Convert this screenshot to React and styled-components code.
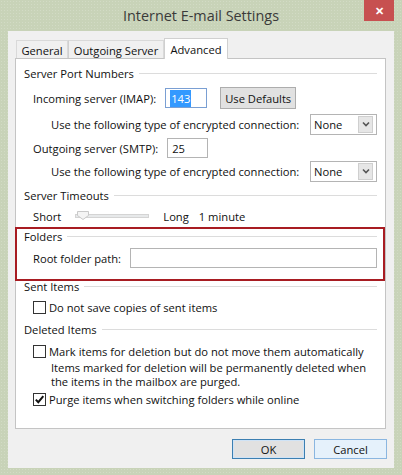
import React from 'react'
import styled, { createGlobalStyle } from 'styled-components'

const GlobalStyle = createGlobalStyle`
  html, body {
    margin: 0;
    padding: 0;
    background: #c8d3b8;
  }
  body {
    font-family: "Segoe UI", "Open Sans", "Noto Sans", sans-serif;
    font-size: 11.2px;
    color: #111;
  }
  * { box-sizing: border-box; }
`

function App() {
  return (
    <>
      <GlobalStyle />
      <Window>
        <TitleBar>
          <Title>Internet E-mail Settings</Title>
          <CloseButton>✕</CloseButton>
        </TitleBar>
        <Client>
          <TabList>
            <Tab $w={52}>General</Tab>
            <Tab $w={96}>Outgoing Server</Tab>
            <Tab $w={64} $active>Advanced</Tab>
          </TabList>
          <Panel>
            <SectionHeader $mt={0}>Server Port Numbers</SectionHeader>
            <Row $mt={12} $indent={9}>
              <span>Incoming server (IMAP):</span>
              <TextBox $width={42} $focused>
                <Selected>143</Selected>
              </TextBox>
              <PushButton>Use Defaults</PushButton>
            </Row>
            <Row $mt={10} $indent={27}>
              <span>Use the following type of encrypted connection:</span>
              <Dropdown />
            </Row>
            <Row $mt={8} $indent={9}>
              <span>Outgoing server (SMTP):</span>
              <TextBox $width={41}>25</TextBox>
            </Row>
            <Row $mt={7} $indent={27}>
              <span>Use the following type of encrypted connection:</span>
              <Dropdown />
            </Row>

            <SectionHeader $mt={11}>Server Timeouts</SectionHeader>
            <Row $mt={8} $indent={9}>
              <span>Short</span>
              <Slider>
                <svg width="12" height="9" viewBox="0 0 12 9">
                  <path d="M0.5 0.5 H11.5 V4.5 L6 8.5 L0.5 4.5 Z" fill="#f4f4f4" stroke="#c9c9c9" />
                </svg>
              </Slider>
              <span>Long</span>
              <Spacer $w={10} />
              <span>1 minute</span>
            </Row>

            <Highlight>
              <SectionHeader $mt={0}>Folders</SectionHeader>
              <Row $mt={9} $indent={9}>
                <span>Root folder path:</span>
                <TextBox $width={247} $grow />
              </Row>
            </Highlight>

            <SectionHeader $mt={0}>Sent Items</SectionHeader>
            <Row $mt={8} $indent={9}>
              <Checkbox />
              <span>Do not save copies of sent items</span>
            </Row>

            <SectionHeader $mt={9}>Deleted Items</SectionHeader>
            <Row $mt={9} $indent={9}>
              <Checkbox />
              <span>Mark items for deletion but do not move them automatically</span>
            </Row>
            <Note>
              <div>Items marked for deletion will be permanently deleted when</div>
              <div>the items in the mailbox are purged.</div>
            </Note>
            <Row $mt={2} $indent={9}>
              <Checkbox checked />
              <span>Purge items when switching folders while online</span>
            </Row>
          </Panel>
          <Footer>
            <DialogButton $default>OK</DialogButton>
            <DialogButton $hover>Cancel</DialogButton>
          </Footer>
        </Client>
      </Window>
    </>
  )
}

function Dropdown() {
  return (
    <Select>
      <span>None</span>
      <ArrowBox>
        <svg width="8" height="6" viewBox="0 0 8 6">
          <path d="M1 1.5 L4 4.5 L7 1.5" fill="none" stroke="#555" strokeWidth="1.6" />
        </svg>
      </ArrowBox>
    </Select>
  )
}

function Checkbox({ checked }) {
  return (
    <Box>
      {checked && (
        <svg width="11" height="11" viewBox="0 0 11 11">
          <path d="M1.8 5.6 L4.3 8.2 L9.3 2.2" fill="none" stroke="#111" strokeWidth="2" />
        </svg>
      )}
    </Box>
  )
}

export default App

const Window = styled.div`
  width: 402px;
  height: 475px;
  display: flex;
  flex-direction: column;
  background-color: #c8d3b8;
  background-image: radial-gradient(rgba(255, 255, 255, 0.18) 1px, transparent 1px);
  background-size: 3px 3px;
`

const TitleBar = styled.div`
  position: relative;
  height: 31px;
  display: flex;
  align-items: center;
  justify-content: center;
`

const Title = styled.span`
  font-size: 14.4px;
  color: #3a3a3a;
  margin-top: -1px;
`

const CloseButton = styled.div`
  position: absolute;
  top: 0;
  right: 8px;
  width: 30px;
  height: 21px;
  background: #c75050;
  color: #fff;
  font-size: 11px;
  font-weight: bold;
  display: flex;
  align-items: center;
  justify-content: center;
`

const Client = styled.div`
  flex: 1;
  margin: 0 8px 7px 8px;
  padding: 7px 8px 9px 7px;
  background: #f0f0f0;
  display: flex;
  flex-direction: column;
`

const TabList = styled.div`
  display: flex;
  align-items: flex-end;
  height: 20px;
  padding-left: 1px;
  position: relative;
  z-index: 1;
`

const Tab = styled.div`
  width: ${p => p.$w}px;
  height: ${p => (p.$active ? '21px' : '18px')};
  margin-bottom: ${p => (p.$active ? '-1px' : '0')};
  padding-top: ${p => (p.$active ? '0' : '1px')};
  display: flex;
  align-items: center;
  justify-content: center;
  background: ${p => (p.$active ? '#fff' : '#f0f0f0')};
  border: 1px solid ${p => (p.$active ? '#d0d0d0' : '#d9d9d9')};
  border-bottom: none;
  & + & {
    border-left: ${p => (p.$active ? '1px solid #d0d0d0' : 'none')};
  }
`

const Panel = styled.div`
  height: 371px;
  background: #fff;
  border: 1px solid #c4c4c4;
  padding: 9px 8px 0 8px;
  display: flex;
  flex-direction: column;
`

const SectionHeader = styled.div`
  height: 10px;
  margin-top: ${p => p.$mt}px;
  display: flex;
  align-items: center;
  gap: 5px;
  white-space: nowrap;
  &::after {
    content: '';
    flex: 1;
    height: 1px;
    background: #dcdcdc;
  }
`

const Row = styled.div`
  height: 16px;
  margin-top: ${p => p.$mt}px;
  padding-left: ${p => p.$indent}px;
  display: flex;
  align-items: center;
  white-space: nowrap;
`

const Spacer = styled.div`
  width: ${p => p.$w}px;
`

const TextBox = styled.div`
  width: ${p => p.$width}px;
  height: 20px;
  flex-shrink: 0;
  margin-left: ${p => (p.$grow ? 'auto' : '9px')};
  border: 1px solid ${p => (p.$focused ? '#7a9fd3' : '#b4b4b4')};
  background: #fff;
  padding-left: 4px;
  display: flex;
  align-items: center;
`

const Selected = styled.span`
  background: #3399ff;
  color: #fff;
  height: 17px;
  line-height: 17px;
  padding: 0 1px;
`

const PushButton = styled.div`
  width: 76px;
  height: 22px;
  flex-shrink: 0;
  margin-left: 13px;
  background: #e1e1e1;
  border: 1px solid #adadad;
  display: flex;
  align-items: center;
  justify-content: center;
`

const Select = styled.div`
  width: 67px;
  height: 21px;
  flex-shrink: 0;
  margin-left: auto;
  border: 1px solid #b4b4b4;
  background: #fff;
  padding: 0 3px 0 3px;
  display: flex;
  align-items: center;
  justify-content: space-between;
`

const ArrowBox = styled.div`
  width: 15px;
  height: 17px;
  background: #e6e6e6;
  border: 1px solid #cfcfcf;
  display: flex;
  align-items: center;
  justify-content: center;
`

const Slider = styled.div`
  position: relative;
  width: 74px;
  height: 4px;
  flex-shrink: 0;
  margin: 0 14px;
  background: #e7e9ea;
  border: 1px solid #d4d4d4;
  svg {
    position: absolute;
    left: 1px;
    top: -4px;
  }
`

const Highlight = styled.div`
  margin: 3px -8px 0 -9px;
  height: 54px;
  border: 2px solid #a81c22;
  padding: 2px 6px 0 7px;
  display: flex;
  flex-direction: column;
`

const Box = styled.div`
  width: 13px;
  height: 13px;
  flex-shrink: 0;
  margin-right: 3px;
  border: 1px solid #333;
  background: #fff;
  display: flex;
  align-items: center;
  justify-content: center;
`

const Note = styled.div`
  margin-top: 2px;
  padding-left: 27px;
  line-height: 14px;
  white-space: nowrap;
`

const Footer = styled.div`
  margin-top: 10px;
  display: flex;
  justify-content: flex-end;
  gap: 9px;
  margin-right: -1px;
`

const DialogButton = styled.div`
  width: 73px;
  height: 20px;
  display: flex;
  align-items: center;
  justify-content: center;
  background: ${p => (p.$hover ? '#e5f1fb' : '#e1e1e1')};
  border: 1px solid ${p => (p.$default ? '#3c7fb1' : p.$hover ? '#8ab6e0' : '#adadad')};
  box-shadow: ${p => (p.$default ? 'inset 0 0 0 1px #cfe3f6' : 'none')};
`
